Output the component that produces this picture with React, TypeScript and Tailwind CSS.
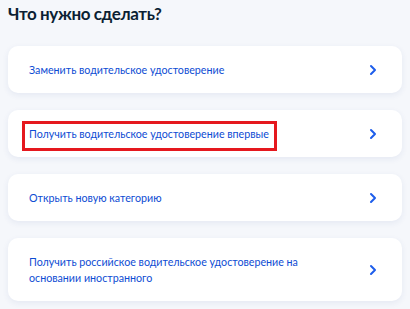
import { ChevronRight } from 'lucide-react';

const items = [
    'Заменить водительское удостоверение',
    'Получить водительское удостоверение впервые',
    'Открыть новую категорию',
    'Получить российское водительское удостоверение на основании иностранного',
];

export default function App() {
    return (
        <div className="min-h-screen w-[410px] bg-[#f5f7fb] px-2 pt-[2px] font-['Lato','Liberation_Sans',sans-serif]">
            <h1 className="text-[17px] font-bold leading-6 tracking-[-0.4px] text-[#0b1f33]">Что нужно сделать?</h1>

            <div className="mt-[20px] flex flex-col gap-[17px]">
                {items.map((text, i) => (
                    <button
                        key={text}
                        className="relative flex w-[394px] items-center justify-between rounded-[10px] bg-white py-[15.5px] pl-[21px] pr-[21px] text-left shadow-[0_2px_6px_rgba(40,70,140,0.08)]"
                    >
                        <span className="relative max-w-[290px] text-[10.7px] leading-4 text-[#0d4cd3]">
                            {text}
                            {i === 1 && (
                                <span className="absolute -left-[7px] -right-[8px] -top-[5px] -bottom-[9px] border-[3px] border-[#e5181e]" />
                            )}
                        </span>
                        <ChevronRight className="h-[16px] w-[16px] text-[#1d5deb]" strokeWidth={3} />
                    </button>
                ))}
            </div>
        </div>
    );
}
